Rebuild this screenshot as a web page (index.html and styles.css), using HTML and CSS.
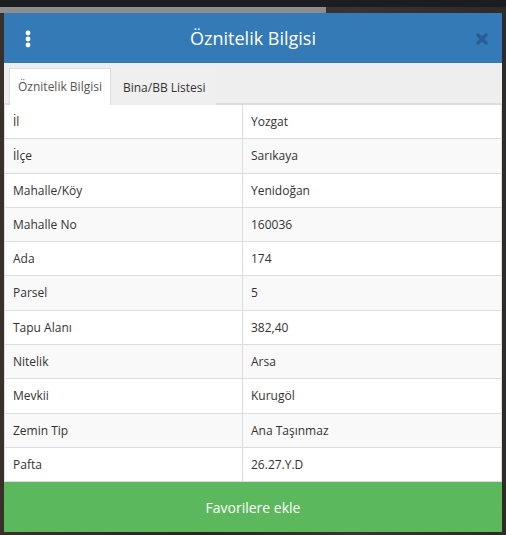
FILE: index.html
```html
<!DOCTYPE html>
<html lang="tr">
<head>
    <meta charset="UTF-8">
    <meta name="viewport" content="width=device-width, initial-scale=1.0">
    <title>Öznitelik Bilgisi</title>
    <link rel="stylesheet" href="styles.css">
</head>
<body>
    <div class="map-toolbar"></div>
    <div class="modal">
        <div class="modal-header">
            <div class="menu-btn">
                <svg width="8" height="18" viewBox="0 0 8 18">
                    <circle cx="4" cy="3" r="2.4" fill="#fff"/>
                    <circle cx="4" cy="9" r="2.4" fill="#fff"/>
                    <circle cx="4" cy="15" r="2.4" fill="#fff"/>
                </svg>
            </div>
            <div class="modal-title">Öznitelik Bilgisi</div>
            <div class="close-btn">
                <svg width="12" height="12" viewBox="0 0 12 12">
                    <path d="M2 2 L10 10 M10 2 L2 10" stroke="#285e93" stroke-width="3.4" stroke-linecap="round"/>
                </svg>
            </div>
        </div>
        <div class="tabs">
            <div class="tab active">Öznitelik Bilgisi</div>
            <div class="tab">Bina/BB Listesi</div>
        </div>
        <table class="attr-table" id="attrTable"></table>
        <div class="fav-btn">Favorilere ekle</div>
    </div>

    <script>
        const attributes = [
            ['İl', 'Yozgat'],
            ['İlçe', 'Sarıkaya'],
            ['Mahalle/Köy', 'Yenidoğan'],
            ['Mahalle No', '160036'],
            ['Ada', '174'],
            ['Parsel', '5'],
            ['Tapu Alanı', '382,40'],
            ['Nitelik', 'Arsa'],
            ['Mevkii', 'Kurugöl'],
            ['Zemin Tip', 'Ana Taşınmaz'],
            ['Pafta', '26.27.Y.D']
        ];
        const table = document.getElementById('attrTable');

        function renderTable() {
            table.innerHTML = '';
            attributes.forEach(([key, value]) => {
                const tr = document.createElement('tr');
                const th = document.createElement('td');
                th.className = 'key';
                th.textContent = key;
                const td = document.createElement('td');
                td.textContent = value;
                tr.appendChild(th);
                tr.appendChild(td);
                table.appendChild(tr);
            });
        }

        renderTable();
    </script>
</body>
</html>
```

FILE: styles.css
```css
body {
    margin: 0;
    height: 535px;
    overflow: hidden;
    font-family: 'Open Sans', 'Noto Sans', sans-serif;
    font-size: 12px;
    color: #333;
    background:
        linear-gradient(to bottom, #1c1d21 0, #1c1d21 7px, transparent 7px),
        linear-gradient(to right, #3a302b, #2a2624 40%, #3b3431 70%, #2d2a28);
    padding-top: 7px;
    box-sizing: border-box;
}
.map-toolbar {
    width: 326px;
    height: 6px;
    background: #8d8d8d;
}
.modal {
    margin: 0 4px;
    background: #fff;
}
.modal-header {
    height: 50px;
    background: #337ab7;
    display: flex;
    align-items: center;
    justify-content: space-between;
    position: relative;
}
.menu-btn {
    width: 48px;
    display: flex;
    justify-content: center;
    padding-top: 2px;
}
.modal-title {
    color: #fff;
    font-size: 18px;
    position: absolute;
    left: 50%;
    transform: translateX(-50%);
}
.close-btn {
    width: 40px;
    display: flex;
    justify-content: center;
    padding-top: 1px;
}
.tabs {
    height: 42px;
    background: #eee;
    border-bottom: 2px solid #ddd;
    box-sizing: border-box;
    display: flex;
    align-items: flex-end;
    padding-left: 5px;
}
.tab {
    padding: 9px 9px 9px 11px;
    line-height: 17px;
    color: #333;
    margin-bottom: -2px;
    border: 1px solid transparent;
    border-bottom: none;
    background: #efefef;
}
.tab.active {
    background: #fff;
    color: #555;
    border-color: #ddd;
    padding: 9px 8px 10px;
}
.attr-table {
    width: 100%;
    border-collapse: collapse;
}
.attr-table td {
    border: 1px solid #ddd;
    padding: 8px;
    line-height: 17.3px;
}
.attr-table tr:nth-child(even) td {
    background: #f9f9f9;
}
.attr-table tr:first-child td {
    border-top: none;
}
.attr-table td.key {
    width: 221px;
}
.fav-btn {
    height: 50px;
    background: #5cb85c;
    color: #fff;
    font-size: 14px;
    display: flex;
    align-items: center;
    justify-content: center;
}
```
